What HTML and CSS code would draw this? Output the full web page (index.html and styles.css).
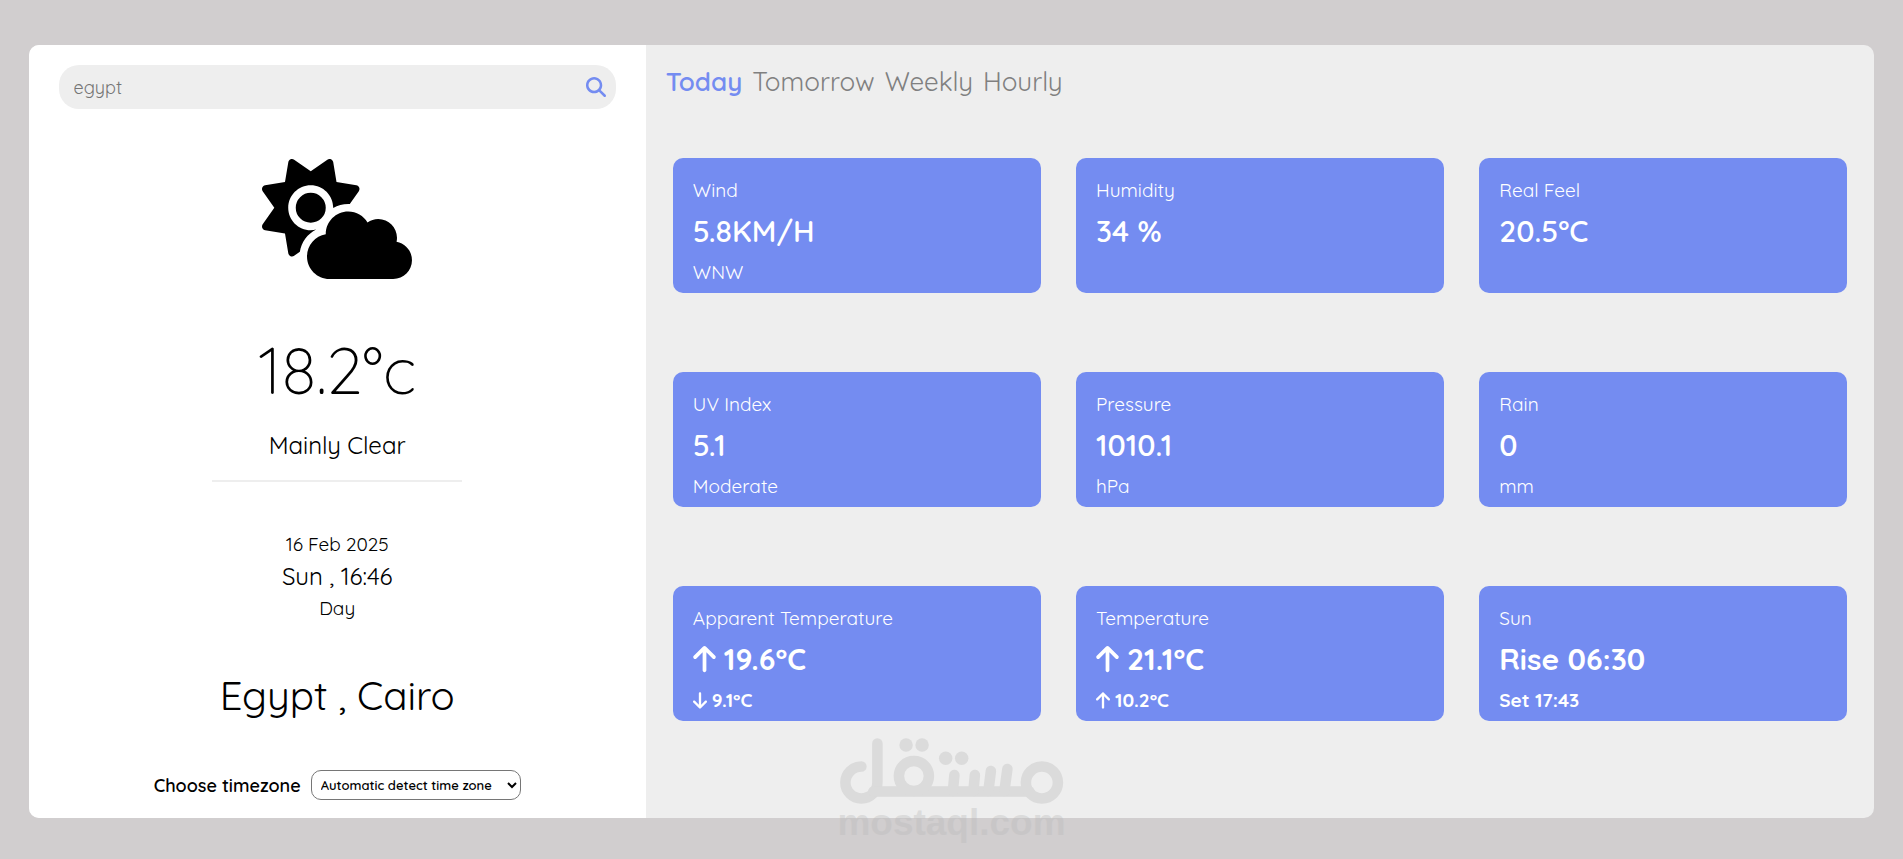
FILE: index.html
```html
<!DOCTYPE html>
<html lang="en">
<head>
<meta charset="utf-8">
<meta name="viewport" content="width=device-width, initial-scale=1">
<title>Weather</title>
<link rel="stylesheet" href="styles.css">
</head>
<body>
<svg class="defs" aria-hidden="true">
  <symbol id="arrow-up" viewBox="0 0 384 512"><path d="M214.6 41.4c-12.5-12.5-32.8-12.5-45.3 0l-160 160c-12.5 12.5-12.5 32.8 0 45.3s32.8 12.5 45.3 0L160 141.2V448c0 17.7 14.3 32 32 32s32-14.3 32-32V141.2L329.4 246.6c12.5 12.5 32.8 12.5 45.3 0s12.5-32.8 0-45.3l-160-160z"/></symbol>
  <symbol id="arrow-down" viewBox="0 0 384 512"><path d="M169.4 470.6c12.5 12.5 32.8 12.5 45.3 0l160-160c12.5-12.5 12.5-32.8 0-45.3s-32.8-12.5-45.3 0L224 370.8V64c0-17.7-14.3-32-32-32s-32 14.3-32 32v306.7L54.6 265.4c-12.5-12.5-32.8-12.5-45.3 0s-12.5 32.8 0 45.3l160 160z"/></symbol>
</svg>
<main class="container">
  <section class="summary">
    <form class="search">
      <input class="search-input" type="search" placeholder="egypt" aria-label="Search for a place">
      <button class="search-button" type="button" aria-label="Search">
        <svg class="search-icon" viewBox="0 0 512 512"><path d="M416 208c0 45.9-14.9 88.3-40 122.7L502.6 457.4c12.5 12.5 12.5 32.8 0 45.3s-32.8 12.5-45.3 0L330.7 376c-34.4 25.2-76.8 40-122.7 40C93.1 416 0 322.9 0 208S93.1 0 208 0S416 93.1 416 208zM208 352a144 144 0 1 0 0-288 144 144 0 1 0 0 288z"/></svg>
      </button>
    </form>
    <svg class="condition-icon" viewBox="0 0 640 512" role="img" aria-label="Partly cloudy"><path d="M294.2 1.2c5.1 2.1 8.7 6.7 9.6 12.1l14.1 84.7 84.7 14.1c5.4 .9 10 4.5 12.1 9.6s1.5 10.9-1.6 15.4l-38.5 55c-2.2-.1-4.4-.2-6.7-.2c-23.3 0-45.1 6.2-64 17.1l0-1.1c0-53-43-96-96-96s-96 43-96 96s43 96 96 96c8.1 0 15.9-1 23.4-2.9c-36.6 18.1-63.3 53.1-69.8 94.9l-24.4 17c-4.5 3.2-10.3 3.8-15.4 1.6s-8.7-6.7-9.6-12.1L98.1 317.9 13.4 303.8c-5.4-.9-10-4.5-12.1-9.6s-1.5-10.9 1.6-15.4L52.5 208 2.9 137.2c-3.2-4.5-3.8-10.3-1.6-15.4s6.7-8.7 12.1-9.6L98.1 98.1l14.1-84.7c.9-5.4 4.5-10 9.6-12.1s10.9-1.5 15.4 1.6L208 52.5 278.8 2.9c4.5-3.2 10.3-3.8 15.4-1.6zM144 208a64 64 0 1 1 128 0 64 64 0 1 1 -128 0zM639.9 431.9c0 44.2-35.8 80-80 80H288c-53 0-96-43-96-96c0-47.6 34.6-87 80-94.6l0-1.3c0-53 43-96 96-96c34.9 0 65.4 18.6 82.2 46.4c13-9.1 28.8-14.4 45.8-14.4c44.2 0 80 35.8 80 80c0 5.9-.6 11.7-1.9 17.2c37.4 6.7 65.8 39.4 65.8 78.7z"/></svg>
    <p class="temperature">18.2°c</p>
    <p class="condition">Mainly Clear</p>
    <hr class="divider">
    <div class="when">
      <p class="date">16 Feb 2025</p>
      <p class="time">Sun , 16:46</p>
      <p class="date">Day</p>
    </div>
    <h1 class="place">Egypt , Cairo</h1>
    <div class="timezone">
      <label class="timezone-label" for="timezone">Choose timezone</label>
      <select class="timezone-select" id="timezone"><option>Automatic detect time zone</option></select>
    </div>
  </section>
  <section class="details">
    <nav class="tabs">
      <button class="tab active" type="button">Today</button>
      <button class="tab" type="button">Tomorrow</button>
      <button class="tab" type="button">Weekly</button>
      <button class="tab" type="button">Hourly</button>
    </nav>
    <div class="cards">
      <article class="card"><h2 class="name">Wind</h2><p class="value">5.8KM/H</p><p class="note">WNW</p></article>
      <article class="card"><h2 class="name">Humidity</h2><p class="value">34 %</p></article>
      <article class="card"><h2 class="name">Real Feel</h2><p class="value">20.5°C</p></article>
      <article class="card"><h2 class="name">UV Index</h2><p class="value">5.1</p><p class="note">Moderate</p></article>
      <article class="card"><h2 class="name">Pressure</h2><p class="value">1010.1</p><p class="note">hPa</p></article>
      <article class="card"><h2 class="name">Rain</h2><p class="value">0</p><p class="note">mm</p></article>
      <article class="card"><h2 class="name">Apparent Temperature</h2><p class="value strong"><svg class="arrow"><use href="#arrow-up"/></svg>19.6°C</p><p class="note strong"><svg class="arrow"><use href="#arrow-down"/></svg>9.1°C</p></article>
      <article class="card"><h2 class="name">Temperature</h2><p class="value strong"><svg class="arrow"><use href="#arrow-up"/></svg>21.1°C</p><p class="note strong"><svg class="arrow"><use href="#arrow-up"/></svg>10.2°C</p></article>
      <article class="card"><h2 class="name">Sun</h2><p class="value strong">Rise 06:30</p><p class="note strong">Set 17:43</p></article>
    </div>
  </section>
</main>
<div class="watermark">
  <svg class="watermark-logo" viewBox="0 0 224 66" role="img" aria-label="مستقل">
    <g fill="none" stroke="currentColor" stroke-width="10.5" stroke-linecap="round">
      <path d="M38 5.5V44.5A16 16 0 1 1 22 28.500"/>
      <path d="M34 53.500H190"/>
      <circle cx="74.500" cy="38" r="15"/>
      <circle cx="202.500" cy="44.500" r="16"/>
      <path d="M115 37l-1.500 16M135.500 37l-1.500 16M151.500 33l-2.500 20M168 31l-3 22"/>
    </g>
    <g fill="currentColor"><circle cx="66.700" cy="7" r="6.700"/><circle cx="82.700" cy="7" r="6.700"/><circle cx="106.300" cy="20.300" r="6.700"/><circle cx="122.300" cy="20.300" r="6.700"/></g>
  </svg>
  <span class="watermark-text">mostaql.com</span>
</div>
</body>
</html>
```
FILE: styles.css
```css
* { box-sizing: border-box; margin: 0; padding: 0; }

body {
  min-height: 100vh;
  padding-top: 45px;
  position: relative;
  background: #d1cecf;
  color: #000;
  font-family: Quicksand, Lato, sans-serif;
}

button, input, select { font: inherit; color: inherit; border: 0; background: none; }

.defs { position: absolute; width: 0; height: 0; }

.container {
  display: grid;
  grid-template-columns: 617fr 1228fr;
  width: 97%;
  min-height: 90vh;
  margin: 0 auto;
  border-radius: 10px;
  overflow: hidden;
  background: #eee;
}

.summary {
  display: flex;
  flex-direction: column;
  align-items: center;
  padding: 20px 30px 18px;
  background: #fff;
}

.search {
  display: flex;
  align-items: center;
  width: 100%;
  height: 44px;
  padding: 0 10px 0 15px;
  border-radius: 20px;
  background: #eee;
}

.search-input { flex: 1; min-width: 0; font-size: 18px; outline: 0; appearance: none; }
.search-input::placeholder { color: #757575; }
.search-button { display: flex; cursor: pointer; }
.search-icon { width: 20px; height: 20px; fill: #748cf1; }

.condition-icon { width: 150px; height: 120px; margin-top: 50px; }

.temperature { margin-top: 51px; font-size: 65px; font-weight: 300; line-height: 80px; }
.condition { margin-top: 20px; font-size: 24px; line-height: 30px; }
.divider { width: 250px; margin-top: 20px; border: 0; border-top: 2px solid #eee; }

.when { display: grid; gap: 5px; margin-top: 50px; text-align: center; }
.date { font-size: 19px; line-height: 24px; }
.time { font-size: 24px; line-height: 30px; }

.place { margin-top: 50px; font-size: 40px; font-weight: 400; line-height: 50px; }

.timezone { display: flex; align-items: center; gap: 10px; margin-top: auto; }
.timezone-label { font-size: 18px; font-weight: 600; }
.timezone-select {
  width: 210px;
  height: 30px;
  padding: 0 5px;
  border: 1px solid #767676;
  border-radius: 10px;
  font-size: 13px;
  font-weight: 600;
}

.details { padding: 20px 27px; }

.tabs { display: flex; gap: 10px; margin-left: -7px; }
.tab { color: gray; font-size: 26px; line-height: 34px; cursor: pointer; }
.tab.active { color: #748cf1; font-weight: 600; }

.cards {
  display: grid;
  grid-template-columns: repeat(3, 1fr);
  gap: 79px 35px;
  margin-top: 59px;
}

.card {
  min-height: 135px;
  padding: 20px 20px 0;
  border-radius: 10px;
  background: #748cf1;
  color: #fff;
}

.name { font-size: 19px; font-weight: 400; line-height: 24px; }
.value { display: flex; align-items: center; gap: 8px; margin-top: 10px; font-size: 30px; font-weight: 600; line-height: 38px; }
.note { display: flex; align-items: center; gap: 5px; margin-top: 10px; font-size: 19px; line-height: 24px; }
.strong { font-weight: 700; }
.value .arrow { width: 23px; height: 30px; }
.note .arrow { width: 14px; height: 19px; }
.arrow { fill: currentColor; }

.watermark {
  position: absolute;
  bottom: 17px;
  left: 50%;
  display: flex;
  flex-direction: column;
  align-items: center;
  transform: translateX(-50%);
  color: #bbb;
  opacity: .37;
  pointer-events: none;
}
.watermark-logo { width: 225px; height: 66px; overflow: visible; }
.watermark-text { font: 700 37px/38px "Liberation Sans", sans-serif; }
```
